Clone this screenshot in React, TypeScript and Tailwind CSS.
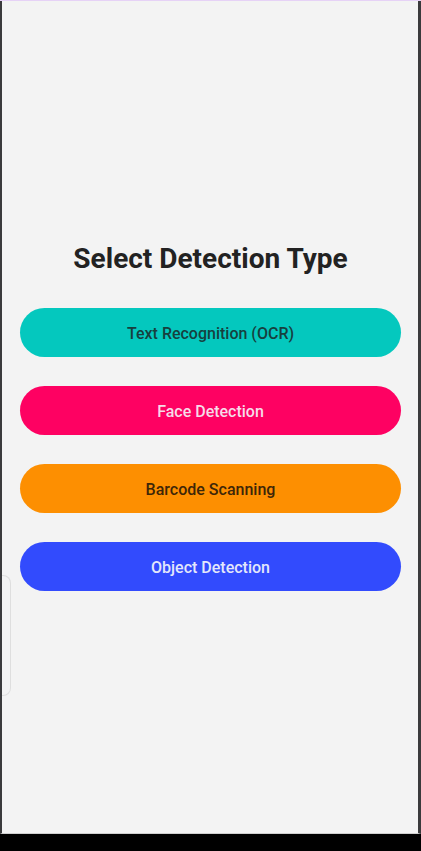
const options = [
  { label: 'Text Recognition (OCR)', cls: 'bg-[#04c8be] text-[#17403e]' },
  { label: 'Face Detection', cls: 'bg-[#fe0162] text-[#f6dbe8]' },
  { label: 'Barcode Scanning', cls: 'bg-[#fd8f01] text-[#3d2608]' },
  { label: 'Object Detection', cls: 'bg-[#324bfd] text-[#e3e7fb]' },
]

export default function App() {
  return (
    <div className="w-[421px] h-[851px] flex flex-col bg-black font-['Roboto',sans-serif] overflow-hidden">
      <div className="h-px bg-[#e6d2f6]" />
      {/* Screen */}
      <div className="relative flex-1 flex flex-col justify-center bg-[#f3f3f3] border-l-2 border-r-[3px] border-b border-[#3a3a3c] border-b-[#cfcfcf] pl-[18px] pr-[17px]">
        <h1 className="text-[28px] leading-[32px] font-bold text-[#222] text-center">
          Select Detection Type
        </h1>
        <div className="mt-[33px] flex flex-col gap-[29px]">
          {options.map((o) => (
            <button
              key={o.label}
              className={`h-[49px] rounded-full text-[16px] font-medium pt-[2px] ${o.cls}`}
            >
              {o.label}
            </button>
          ))}
        </div>
        {/* faint side handle */}
        <div className="absolute left-0 top-[574px] w-[9px] h-[121px] border border-l-0 border-[#dedede] rounded-r-[8px]" />
      </div>
      <div className="h-[17px] bg-black" />
    </div>
  )
}
